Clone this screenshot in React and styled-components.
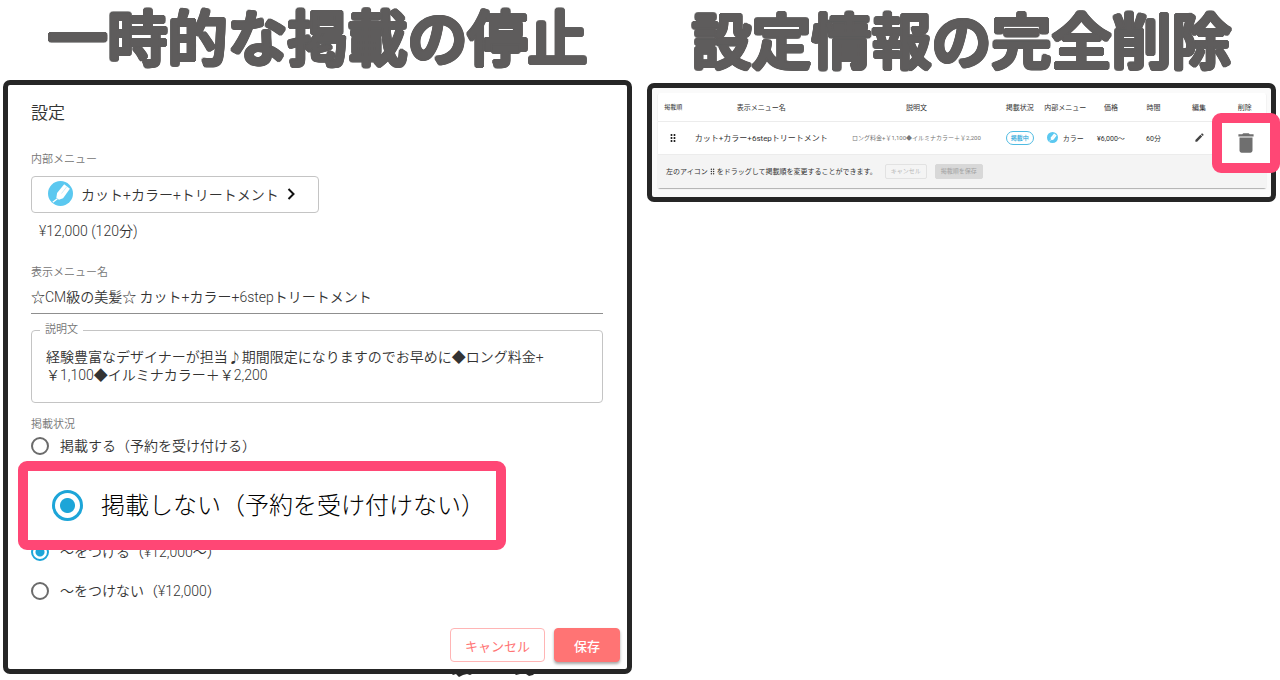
import React from "react";
import styled, { createGlobalStyle } from "styled-components";
import { MdDelete, MdEdit, MdDragIndicator } from "react-icons/md";

const GlobalStyle = createGlobalStyle`
  *, *::before, *::after { box-sizing: border-box; }
  body {
    margin: 0;
    background: #fff;
    color: #333;
    font-family: Roboto, "Noto Sans CJK JP", sans-serif;
    font-weight: 350;
  }
  button, input, textarea { font: inherit; color: inherit; margin: 0; }
  fieldset { border: 0; margin: 0; padding: 0; min-width: 0; }
  legend { padding: 0; }
  h1, h2, p { margin: 0; }
`;

const Page = styled.main`
  display: grid;
  grid-template-columns: minmax(0, 1fr) minmax(0, 1fr);
  gap: 15px;
  align-items: start;
  padding: 0 4px 4px 3px;
  overflow: hidden;
`;

const Column = styled.section`
  padding-top: ${(p) => p.$top || 0}px;
`;

const Headline = styled.h1`
  padding-top: 2px;
  font-size: 60px;
  line-height: 78px;
  font-weight: 500;
  text-align: center;
  white-space: nowrap;
  color: #5e5c5c;
  text-shadow:
    2px 0 #5e5c5c, -2px 0 #5e5c5c, 0 2px #5e5c5c, 0 -2px #5e5c5c,
    1px 1px #5e5c5c, -1px 1px #5e5c5c, 1px -1px #5e5c5c, -1px -1px #5e5c5c,
    2px 1px #5e5c5c, -2px 1px #5e5c5c, 2px -1px #5e5c5c, -2px -1px #5e5c5c,
    1px 2px #5e5c5c, -1px 2px #5e5c5c, 1px -2px #5e5c5c, -1px -2px #5e5c5c;
`;

const Panel = styled.div`
  position: relative;
  border: 5px solid #262626;
  border-radius: 7px;
  background: ${(p) => p.$tint || "#fff"};
`;

const Form = styled.form`
  display: flex;
  flex-direction: column;
  padding: 16px 24px 0 23px;
`;

const Title = styled.h2`
  margin-bottom: 27px;
  font-size: 17px;
  line-height: 24px;
  font-weight: 350;
`;

const Caption = styled.label`
  display: block;
  font-size: 11px;
  line-height: 16px;
  color: #757575;
`;

const MenuButton = styled.button`
  display: inline-flex;
  align-items: center;
  align-self: flex-start;
  gap: 8px;
  height: 37px;
  margin-top: 8px;
  padding: 0 23px 2px 16px;
  border: 1px solid #c4c4c4;
  border-radius: 4px;
  background: #fff;
  font-size: 14px;
`;

const Price = styled.p`
  margin: 8px 8px 24px;
  font-size: 14px;
  line-height: 20px;
`;

const LineInput = styled.input`
  width: 100%;
  height: 33px;
  padding: 0 0 2px;
  border: 0;
  border-bottom: 1px solid #8f8f8f;
  font-size: 14px;
  outline: none;
`;

const Outlined = styled.fieldset`
  && {
    margin: 8px 0 14px;
    padding: 0 14px;
    border: 1px solid #c4c4c4;
    border-radius: 4px;
  }
  legend { margin-left: -6px; padding: 0 5px; height: 16px; }
`;

const Area = styled.textarea`
  display: block;
  width: 100%;
  height: 64px;
  padding: 10px 0 0;
  border: 0;
  outline: none;
  resize: none;
  overflow: hidden;
  font-size: 14px;
  line-height: 18px;
  background: transparent;
`;

const Radio = styled.input.attrs({ type: "radio" })`
  appearance: none;
  flex: none;
  width: ${(p) => (p.$big ? 31 : 18)}px;
  height: ${(p) => (p.$big ? 31 : 18)}px;
  border: ${(p) => (p.$big ? 3 : 2)}px solid #6b6b6b;
  border-radius: 50%;
  background: #fff;
  &:checked {
    border-color: #1da5d8;
    background: radial-gradient(circle, #1da5d8 ${(p) => (p.$big ? "7px, #fff 8px" : "4px, #fff 5px")});
  }
`;

const Option = styled.label`
  display: flex;
  align-items: center;
  gap: ${(p) => (p.$big ? 18 : 11)}px;
  font-size: ${(p) => (p.$big ? 24 : 14)}px;
  line-height: ${(p) => (p.$big ? 32 : 24)}px;
  font-weight: ${(p) => (p.$big ? 300 : 350)};
  white-space: nowrap;
  color: ${(p) => (p.$big ? "#000" : "inherit")};
`;

const Callout = styled.div`
  position: absolute;
  z-index: 1;
  display: flex;
  align-items: center;
  border: 10px solid #ff4775;
  border-radius: 9px;
  background: #fff;
`;

const RadioCallout = styled(Callout)`
  top: 27px;
  left: -13px;
  width: 488px;
  height: 89px;
  padding-left: 24px;
`;

const DeleteCallout = styled(Callout)`
  top: 25px;
  right: -9px;
  width: 68px;
  height: 60px;
  justify-content: center;
`;

const PublishGroup = styled.fieldset`
  && { position: relative; margin-bottom: 82px; }
  legend { margin-bottom: 1px; }
`;

const SuffixGroup = styled.fieldset`
  display: flex;
  flex-direction: column;
  gap: 15px;
`;

const Actions = styled.div`
  display: flex;
  justify-content: flex-end;
  gap: 9px;
  padding: 25px 7px 7px;
`;

const ActionButton = styled.button`
  height: 34px;
  padding: 0 ${(p) => (p.$filled ? 19 : 14)}px;
  border: 1px solid ${(p) => (p.$filled ? "#ff7474" : "#ffb5b5")};
  border-radius: 4px;
  background: ${(p) => (p.$filled ? "#ff7474" : "#fff")};
  color: ${(p) => (p.$filled ? "#fff" : "#ff7474")};
  box-shadow: ${(p) => (p.$filled ? "0 2px 3px rgba(0,0,0,.35)" : "none")};
  font-size: 13px;
  font-weight: ${(p) => (p.$filled ? 500 : 400)};
`;

const EdgeMarks = styled.svg`
  position: absolute;
  top: 100%;
  right: 90px;
`;

const Card = styled.div`
  margin: 5px 5px 9px 6px;
  border-radius: 2px;
  background: #fff;
  box-shadow: 0 1px 1px rgba(0, 0, 0, .3);
`;

const Table = styled.table`
  width: 100%;
  table-layout: fixed;
  border-collapse: collapse;
  font-size: 7px;
  font-weight: 400;
  th, td {
    padding: 0;
    text-align: center;
    white-space: nowrap;
    border-bottom: 1px solid #ececec;
  }
  th { height: 28px; font-weight: 400; }
  th:first-child { font-size: 6px; }
  td { height: 33px; }
`;

const NameCell = styled.td`
  font-size: 8px;
`;

const MutedCell = styled.td`
  font-size: 6px;
  color: #757575;
`;

const Chip = styled.span`
  display: inline-block;
  padding: 0 4px;
  border: 1px solid #4fbbe2;
  border-radius: 7px;
  line-height: 12px;
  font-size: 6px;
  font-weight: 500;
  color: #1da5d8;
`;

const Inline = styled.span`
  display: flex;
  align-items: center;
  justify-content: center;
  gap: 5px;
`;

const IconButton = styled.button`
  display: inline-flex;
  vertical-align: middle;
  padding: 0;
  border: 0;
  background: none;
  color: ${(p) => p.$color || "#444"};
`;

const Footer = styled.div`
  display: flex;
  align-items: center;
  gap: 8px;
  height: 33px;
  padding-left: 8px;
  background: #f4f4f4;
  font-size: 7px;
  font-weight: 400;
  white-space: nowrap;
`;

const FooterText = styled.p`
  display: flex;
  align-items: center;
`;

const SmallButton = styled.button`
  height: 15px;
  padding: 0 5px;
  border: 1px solid ${(p) => (p.$filled ? "#d8d8d8" : "#e2e2e2")};
  border-radius: 2px;
  background: ${(p) => (p.$filled ? "#d8d8d8" : "#f4f4f4")};
  font-size: 6px;
  line-height: 12px;
  color: ${(p) => (p.$filled ? "#a2a2a2" : "#b8b8b8")};
`;

function ColorIcon({ size }) {
  return (
    <svg width={size} height={size} viewBox="0 0 24 24" aria-hidden="true">
      <circle cx="12" cy="12" r="12" fill="#5bc8f0" />
      <path d="M15.500 3l5.500 4.500-6.500 9-4 1.500-2.500-2 .7-4.500z" fill="#fff" />
      <path d="M18 5.500l-5 6.500" stroke="#bfe8f8" strokeWidth=".8" />
      <path d="M9 17l-4.500 3.500" stroke="#fff" strokeWidth="1.200" />
    </svg>
  );
}

function Chevron() {
  return (
    <svg width="8" height="12" viewBox="0 0 8 12" aria-hidden="true">
      <path d="M1.500 1l5 5-5 5" fill="none" stroke="#111" strokeWidth="2" />
    </svg>
  );
}

function SettingsPanel() {
  return (
    <Panel>
      <Form onSubmit={(e) => e.preventDefault()}>
        <Title>設定</Title>
        <Caption htmlFor="menu">内部メニュー</Caption>
        <MenuButton id="menu" type="button">
          <ColorIcon size={25} />
          カット+カラー+トリートメント
          <Chevron />
        </MenuButton>
        <Price>¥12,000 (120分)</Price>
        <Caption htmlFor="name">表示メニュー名</Caption>
        <LineInput id="name" defaultValue="☆CM級の美髪☆ カット+カラー+6stepトリートメント" />
        <Outlined>
          <legend><Caption htmlFor="desc">説明文</Caption></legend>
          <Area id="desc" defaultValue={"経験豊富なデザイナーが担当♪期間限定になりますのでお早めに◆ロング料金+\n￥1,100◆イルミナカラー＋￥2,200"} />
        </Outlined>
        <PublishGroup>
          <Caption as="legend">掲載状況</Caption>
          <Option><Radio name="publish" />掲載する（予約を受け付ける）</Option>
          <RadioCallout>
            <Option $big><Radio $big name="publish" defaultChecked />掲載しない（予約を受け付けない）</Option>
          </RadioCallout>
        </PublishGroup>
        <SuffixGroup>
          <Option><Radio name="suffix" defaultChecked />～をつける（¥12,000～）</Option>
          <Option><Radio name="suffix" />～をつけない（¥12,000）</Option>
        </SuffixGroup>
      </Form>
      <Actions>
        <ActionButton type="button">キャンセル</ActionButton>
        <ActionButton type="button" $filled>保存</ActionButton>
      </Actions>
      <EdgeMarks width="92" height="8" viewBox="0 0 92 8" aria-hidden="true">
        <path d="M0 4h6l2 2 3-1 3 3 4-2 4-1 3 1 4-2zM69 4l2 2 4-1 3-1 3 1 3 2 4-1 2-2z" fill="#262626" />
      </EdgeMarks>
    </Panel>
  );
}

const widths = ["5%", "24%", "27%", "7%", "8%", "7%", "7%", "8%", "7%"];
const headings = ["掲載順", "表示メニュー名", "説明文", "掲載状況", "内部メニュー", "価格", "時間", "編集", "削除"];

function MenuTable() {
  return (
    <Panel $tint="#fafafa">
      <Card>
        <Table>
          <colgroup>{widths.map((w, i) => <col key={i} width={w} />)}</colgroup>
          <thead>
            <tr>{headings.map((t) => <th key={t}>{t}</th>)}</tr>
          </thead>
          <tbody>
            <tr>
              <td><IconButton aria-label="並べ替え" $color="#222"><MdDragIndicator size={12} /></IconButton></td>
              <NameCell>カット+カラー+6stepトリートメント</NameCell>
              <MutedCell>ロング料金+￥1,100◆イルミナカラー＋￥2,200</MutedCell>
              <td><Chip>掲載中</Chip></td>
              <td><Inline><ColorIcon size={11} />カラー</Inline></td>
              <td>¥6,000～</td>
              <td>60分</td>
              <td><IconButton aria-label="編集"><MdEdit size={11} /></IconButton></td>
              <td />
            </tr>
          </tbody>
        </Table>
        <Footer>
          <FooterText>左のアイコン<MdDragIndicator size={9} />をドラッグして掲載順を変更することができます。</FooterText>
          <SmallButton disabled>キャンセル</SmallButton>
          <SmallButton disabled $filled>掲載順を保存</SmallButton>
        </Footer>
      </Card>
      <DeleteCallout>
        <IconButton aria-label="削除" $color="#6f6f6f"><MdDelete size={26} /></IconButton>
      </DeleteCallout>
    </Panel>
  );
}

export default function App() {
  return (
    <>
      <GlobalStyle />
      <Page>
        <Column>
          <Headline>一時的な掲載の停止</Headline>
          <SettingsPanel />
        </Column>
        <Column $top={3}>
          <Headline>設定情報の完全削除</Headline>
          <MenuTable />
        </Column>
      </Page>
    </>
  );
}
